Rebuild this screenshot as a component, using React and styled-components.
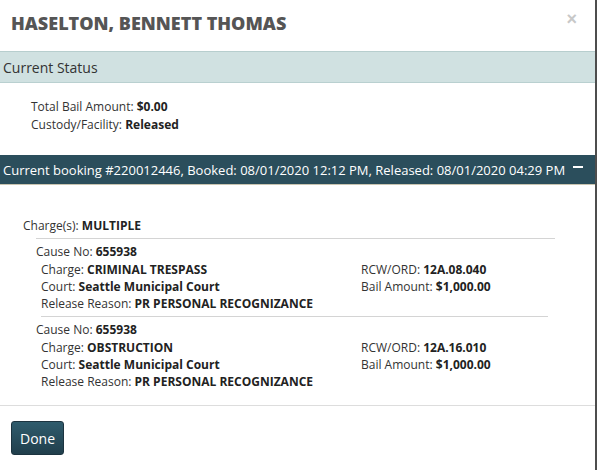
import React from "react";
import styled, { createGlobalStyle } from "styled-components";

const GlobalStyle = createGlobalStyle`
  html, body {
    margin: 0;
    padding: 0;
    background: #fff;
  }
  body {
    font-family: "Open Sans", "Liberation Sans", sans-serif;
    color: #333;
  }
`;

const charges = [
  {
    causeNo: "655938",
    charge: "CRIMINAL TRESPASS",
    court: "Seattle Municipal Court",
    reason: "PR PERSONAL RECOGNIZANCE",
    rcw: "12A.08.040",
    bail: "$1,000.00",
  },
  {
    causeNo: "655938",
    charge: "OBSTRUCTION",
    court: "Seattle Municipal Court",
    reason: "PR PERSONAL RECOGNIZANCE",
    rcw: "12A.16.010",
    bail: "$1,000.00",
  },
];

const App = () => {
  return (
    <>
      <GlobalStyle />
      <Modal>
        <Header>
          <Title>HASELTON, BENNETT THOMAS</Title>
          <Close>×</Close>
        </Header>

        <StatusBar>Current Status</StatusBar>
        <StatusBody>
          <Line tall>
            Total Bail Amount: <b>$0.00</b>
          </Line>
          <Line tall>
            Custody/Facility: <b>Released</b>
          </Line>
        </StatusBody>

        <BookingBar>
          <span>
            Current booking #220012446, Booked: 08/01/2020 12:12 PM, Released:
            08/01/2020 04:29 PM
          </span>
          <Minus />
        </BookingBar>

        <ChargesBody>
          <Line>
            Charge(s): <b>MULTIPLE</b>
          </Line>
          <ChargeList>
            {charges.map((c, i) => (
              <ChargeItem key={i}>
                <Divider inset={i > 0} />
                <Line>
                  Cause No: <b>{c.causeNo}</b>
                </Line>
                <ChargeGrid>
                  <Line>
                    Charge: <b>{c.charge}</b>
                  </Line>
                  <Line>
                    RCW/ORD: <b>{c.rcw}</b>
                  </Line>
                  <Line>
                    Court: <b>{c.court}</b>
                  </Line>
                  <Line>
                    Bail Amount: <b>{c.bail}</b>
                  </Line>
                  <Line>
                    Release Reason: <b>{c.reason}</b>
                  </Line>
                </ChargeGrid>
              </ChargeItem>
            ))}
          </ChargeList>
        </ChargesBody>

        <Footer>
          <DoneButton type="button">Done</DoneButton>
        </Footer>
      </Modal>
    </>
  );
};

export default App;

const Modal = styled.div`
  width: 595px;
  height: 470px;
  border-right: 2px solid #4d4d4d;
  background: #fff;
  overflow: hidden;
`;

const Header = styled.div`
  display: flex;
  justify-content: space-between;
  align-items: flex-start;
  height: 51px;
  box-sizing: border-box;
  padding: 10px 18px 0 11px;
`;

const Title = styled.h3`
  margin: 0;
  font-size: 18px;
  font-weight: 800;
  color: #555;
  line-height: 26px;
`;

const Close = styled.span`
  font-family: "Liberation Sans", sans-serif;
  font-size: 18px;
  font-weight: 700;
  color: #c8c8c8;
  line-height: 1;
  margin-top: 0;
`;

const StatusBar = styled.div`
  height: 32px;
  box-sizing: border-box;
  display: flex;
  align-items: center;
  padding: 0 3px;
  background: #d0e1e1;
  border-top: 1px solid #b7cece;
  border-bottom: 1px solid #b9d0d0;
  font-size: 14px;
  color: #333;
`;

const StatusBody = styled.div`
  padding: 15px 31px 0;
  height: 72px;
  box-sizing: border-box;
`;

const Line = styled.div`
  font-size: 12px;
  line-height: ${(p) => (p.tall ? "18px" : "17px")};
  color: #333;
  white-space: nowrap;

  b {
    font-weight: 700;
    color: #222;
  }
`;

const BookingBar = styled.div`
  height: 30px;
  box-sizing: border-box;
  display: flex;
  align-items: center;
  justify-content: space-between;
  padding: 0 12px 0 3px;
  background: #2b4e5c;
  border-bottom: 1px solid #c9c4b0;
  color: #fff;
  font-size: 13px;
  white-space: nowrap;
`;

const Minus = styled.span`
  display: block;
  width: 10px;
  height: 2px;
  background: #fff;
  margin-bottom: 6px;
`;

const ChargesBody = styled.div`
  padding: 32px 23px 0 23px;
  height: 220px;
  box-sizing: border-box;
`;

const ChargeList = styled.div`
  margin-left: 13px;
  width: 519px;
`;

const ChargeItem = styled.div`
  margin-top: 4px;
`;

const Divider = styled.div`
  height: 1px;
  background: #d4d4d4;
  margin-left: ${(p) => (p.inset ? "5px" : "0")};
  width: ${(p) => (p.inset ? "507px" : "519px")};
  margin-bottom: 4px;
`;

const ChargeGrid = styled.div`
  display: grid;
  grid-template-columns: 320px 1fr;
  padding-left: 5px;
  margin-top: 1px;
`;

const Footer = styled.div`
  border-top: 1px solid #ddd;
  padding: 15px 11px;
`;

const DoneButton = styled.button`
  width: 53px;
  height: 34px;
  border: 1px solid #1c3440;
  border-radius: 3px;
  background: linear-gradient(#2f5c6d, #213f4c);
  color: #fff;
  font-family: "Open Sans", "Liberation Sans", sans-serif;
  font-size: 14px;
  cursor: pointer;
  padding: 0;
`;
